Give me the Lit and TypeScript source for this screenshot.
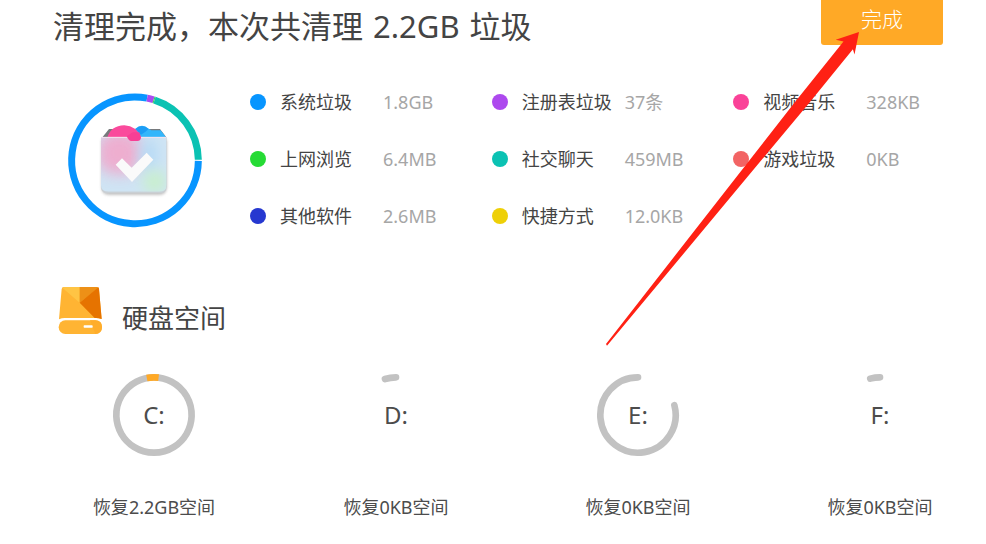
import { LitElement, html, css, svg } from "lit";
import { customElement } from "lit/decorators.js";

interface JunkItem {
  name: string;
  amount: string;
  tone: string;
}

interface Disk {
  letter: string;
  freed: string;
  used: [number, number];
  highlight?: [number, number];
}

const JUNK: JunkItem[] = [
  { name: "系统垃圾", amount: "1.8GB", tone: "azure" },
  { name: "注册表垃圾", amount: "37条", tone: "purple" },
  { name: "视频音乐", amount: "328KB", tone: "pink" },
  { name: "上网浏览", amount: "6.4MB", tone: "green" },
  { name: "社交聊天", amount: "459MB", tone: "teal" },
  { name: "游戏垃圾", amount: "0KB", tone: "coral" },
  { name: "其他软件", amount: "2.6MB", tone: "navy" },
  { name: "快捷方式", amount: "12.0KB", tone: "yellow" },
];

// Arc angles are in degrees, clockwise from twelve o'clock.
const DISKS: Disk[] = [
  { letter: "C:", freed: "2.2GB", used: [0, 359.9], highlight: [-11, 7] },
  { letter: "D:", freed: "0KB", used: [-17, 0] },
  { letter: "E:", freed: "0KB", used: [75, 360] },
  { letter: "F:", freed: "0KB", used: [-15, 0] },
];

function arc(cx: number, cy: number, r: number, from: number, to: number): string {
  const point = (deg: number) => {
    const a = ((deg - 90) * Math.PI) / 180;
    return `${(cx + r * Math.cos(a)).toFixed(2)} ${(cy + r * Math.sin(a)).toFixed(2)}`;
  };
  return `M${point(from)}A${r} ${r} 0 ${to - from > 180 ? 1 : 0} 1 ${point(to)}`;
}

@customElement("junk-ring")
export class JunkRing extends LitElement {
  static styles = css`
    :host { display: block; flex: none; }
    .ring { display: block; width: 150px; height: 150px; }
    .seg { fill: none; stroke-width: 21; }
  `;

  render() {
    const seg = (from: number, to: number, color: string) =>
      svg`<path class="seg" d=${arc(225, 226, 190, from, to)} stroke=${color}></path>`;
    return html`
      <svg class="ring" viewBox="0 0 450 450" aria-hidden="true">
        <defs>
          <filter id="soft" x="-60%" y="-60%" width="220%" height="220%">
            <feGaussianBlur stdDeviation="20"></feGaussianBlur>
          </filter>
          <filter id="drop" x="-20%" y="-20%" width="140%" height="140%">
            <feGaussianBlur stdDeviation="4"></feGaussianBlur>
          </filter>
          <clipPath id="front">
            <path d="M123 156H320V300Q320 320 298 320H145Q123 320 123 300Z"></path>
          </clipPath>
        </defs>
        ${seg(90.5, 371, "#0795ff")}
        ${seg(11, 17, "#a94bf0")}
        ${seg(17, 18, "#3fd05c")}
        ${seg(18, 89.5, "#0bc2b3")}
        <path d="M126 158L147 132H300L320 158Z" fill="#77797c"></path>
        <path d="M215 158L226 131Q246 113 266 131L274 136H302L316 154V158Z" fill="#33b6fb"></path>
        <path d="M226 132Q246 114 266 132Q256 142 243 149Z" fill="#1c9df5"></path>
        <path d="M142 158Q152 122 193 121Q230 123 243 158Z" fill="#fa4a9c"></path>
        <path d="M125 164H320V306Q320 329 298 329H147Q125 329 125 306Z" fill="#8f8f8f" opacity="0.6" filter="url(#drop)"></path>
        <path d="M123 158H320V305Q320 325 298 325H145Q123 325 123 305Z" fill="#c9cfd4"></path>
        <g clip-path="url(#front)">
          <rect x="123" y="156" width="197" height="166" fill="#cfe4f4"></rect>
          <rect x="112" y="140" width="132" height="128" rx="55" fill="#f5a0c6" opacity="0.8" filter="url(#soft)"></rect>
          <ellipse cx="266" cy="210" rx="24" ry="48" fill="#b3daf6" filter="url(#soft)"></ellipse>
          <circle cx="284" cy="290" r="34" fill="#c8f0ca" filter="url(#soft)"></circle>
        </g>
        <path d="M124 157H319" stroke="#f6e4f0" stroke-width="3"></path>
        <path d="M200 154L218 142H238L243 157Q243 168 232 168H214Q206 168 200 154Z" fill="#f73f95"></path>
        <path d="M167 239L186 220L215 248L260 203L280 224L216 291Z" fill="#fafafa"></path>
      </svg>
    `;
  }
}

@customElement("disk-gauge")
export class DiskGauge extends LitElement {
  static properties = { disk: { attribute: false } };
  declare disk: Disk;

  static styles = css`
    :host { display: flex; flex-direction: column; align-items: center; gap: 38px; width: 124px; }
    .dial { display: grid; place-items: center; }
    .dial > * { grid-area: 1 / 1; }
    .arc { display: block; width: 84px; height: 84px; }
    .used { fill: none; stroke: #c2c2c2; stroke-width: 20; stroke-linecap: round; }
    .freed { fill: none; stroke: #ffa926; stroke-width: 20; }
    .letter { font-size: 24px; line-height: 32px; color: #4c4c4c; }
    .note { margin: 0; font-size: 18px; line-height: 24px; white-space: nowrap; color: #4c4c4c; }
  `;

  render() {
    const { letter, freed, used, highlight } = this.disk;
    return html`
      <div class="dial">
        <svg class="arc" viewBox="0 0 252 252" aria-hidden="true">
          <path class="used" d=${arc(126, 126, 113, used[0], used[1])}></path>
          ${highlight
            ? svg`<path class="freed" d=${arc(126, 126, 113, highlight[0], highlight[1])}></path>`
            : null}
        </svg>
        <span class="letter">${letter}</span>
      </div>
      <p class="note">恢复${freed}空间</p>
    `;
  }
}

@customElement("app-root")
export class AppRoot extends LitElement {
  static styles = css`
    :host {
      display: block;
      position: relative;
      overflow: hidden;
      background: #fff;
      color: #444;
      font-family: "Noto Sans", "Noto Sans CJK SC", sans-serif;
    }
    .top { display: flex; justify-content: space-between; align-items: flex-start; padding: 0 43px 0 53px; }
    .title { margin: 0; padding-top: 4px; font-size: 31px; line-height: 44px; font-weight: 400; white-space: nowrap; }
    .total { margin: 0 2px; }
    .done {
      width: 122px; height: 45px; padding: 0 0 8px; border: 0; border-radius: 0 0 3px 3px;
      background: #ffa926; color: #fff; font: inherit; font-size: 21px; font-weight: 300; line-height: 30px; cursor: pointer;
    }
    .summary { display: flex; align-items: center; gap: 40px; margin-top: 37px; padding: 0 11px 0 60px; }
    .legend { flex: 1; display: grid; grid-template-columns: repeat(3, 1fr); row-gap: 33px; margin: 0; padding: 0 0 2px; list-style: none; }
    .item { display: flex; align-items: center; font-size: 18px; line-height: 24px; white-space: nowrap; }
    .dot { flex: none; width: 16px; height: 16px; margin-right: 14px; border-radius: 50%; }
    .name { width: 103px; }
    .amount { color: #a6a6a6; }
    .azure { background: #0795ff; }
    .purple { background: #ad49ee; }
    .pink { background: #fa4298; }
    .green { background: #26db35; }
    .teal { background: #0bc2b3; }
    .coral { background: #f26464; }
    .navy { background: #2638d0; }
    .yellow { background: #eed007; }
    .section { display: flex; align-items: flex-end; gap: 19px; margin-top: 51px; padding: 0 58px; }
    .drive { display: block; width: 45px; height: 49px; }
    .heading { margin: 0; font-size: 26px; line-height: 34px; font-weight: 400; }
    .disks { display: flex; justify-content: space-between; margin-top: 38px; padding: 0 44px 25px 92px; }
    .pointer { position: absolute; top: 30px; right: 126px; width: 256px; height: 316px; pointer-events: none; }
  `;

  render() {
    return html`
      <header class="top">
        <h1 class="title">清理完成，本次共清理 <span class="total">2.2GB</span> 垃圾</h1>
        <button class="done" type="button">完成</button>
      </header>
      <section class="summary">
        <junk-ring></junk-ring>
        <ul class="legend">
          ${JUNK.map(
            (j) => html`<li class="item">
              <span class="dot ${j.tone}"></span><span class="name">${j.name}</span><span class="amount">${j.amount}</span>
            </li>`
          )}
        </ul>
      </section>
      <div class="section">
        <svg class="drive" viewBox="24 18 135 147" aria-hidden="true">
          <path d="M42 21H140Q146 21 147 27L155 117Q146 114 138 114H44Q35 114 27 118L35 27Q36 21 42 21Z" fill="#ffb433"></path>
          <path d="M37 23Q39 21 42 21H89V68Z" fill="#ffc444"></path>
          <path d="M89 21H140Q143 21 145 23L89 68Z" fill="#ed9017"></path>
          <path d="M145 22Q147 24 147 27L155 117Q146 114 138 114H134L89 68Z" fill="#e67300"></path>
          <rect x="26" y="121" width="130" height="41" rx="20" fill="#ffb433"></rect>
          <path d="M120 121H136Q156 121 156 141T136 162Z" fill="#ffad2b"></path>
          <rect x="101" y="136" width="27" height="7" rx="2" fill="#fff"></rect>
        </svg>
        <h2 class="heading">硬盘空间</h2>
      </div>
      <section class="disks">
        ${DISKS.map((d) => html`<disk-gauge .disk=${d}></disk-gauge>`)}
      </section>
      <svg class="pointer" viewBox="604 30 256 316" aria-hidden="true">
        <path d="M859 32L835.7 39.7L843.5 41.5L795 102L727 189L606 344L607 345.8L736.5 190L810 102L852.9 49.3L854.5 54.5Z" fill="#ff2114"></path>
      </svg>
    `;
  }
}
